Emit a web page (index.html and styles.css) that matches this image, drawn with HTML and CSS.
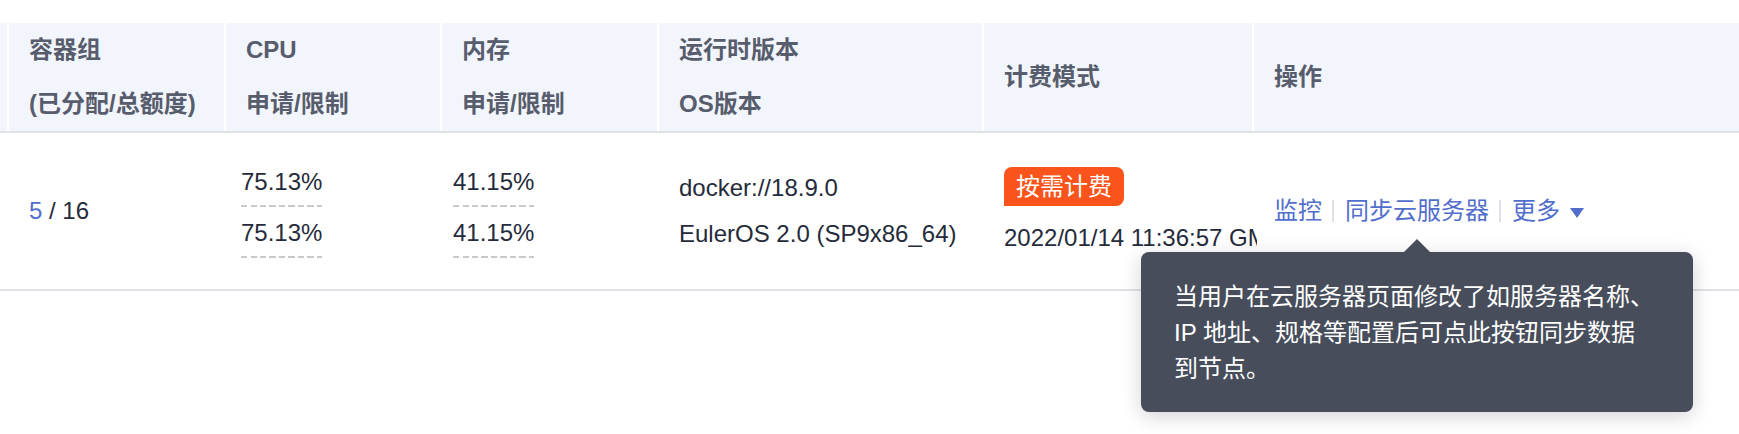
FILE: index.html
```html
<!DOCTYPE html>
<html lang="zh-CN">
<head>
<meta charset="utf-8">
<title>节点列表</title>
<link rel="stylesheet" href="styles.css">
</head>
<body>
<div class="page">
<div class="table">
  <div class="row head">
    <div class="cell stub"></div>
    <div class="cell"><div>容器组</div><div>(已分配/总额度)</div></div>
    <div class="cell"><div>CPU</div><div>申请/限制</div></div>
    <div class="cell"><div>内存</div><div>申请/限制</div></div>
    <div class="cell"><div>运行时版本</div><div>OS版本</div></div>
    <div class="cell"><div>计费模式</div></div>
    <div class="cell"><div>操作</div></div>
  </div>
  <div class="row body">
    <div class="cell stub"></div>
    <div class="cell pods"><div><span class="link">5</span> / 16</div></div>
    <div class="cell usage cpu">
      <div class="usage-item">75.13%</div>
      <div class="usage-item">75.13%</div>
    </div>
    <div class="cell usage mem">
      <div class="usage-item">41.15%</div>
      <div class="usage-item">41.15%</div>
    </div>
    <div class="cell versions">
      <div>docker://18.9.0</div>
      <div>EulerOS 2.0 (SP9x86_64)</div>
    </div>
    <div class="cell billing">
      <span class="badge">按需计费</span>
      <div class="date">2022/01/14 11:36:57 GMT+08:00</div>
    </div>
    <div class="cell actions">
      <div class="action-list">
        <span class="link">监控</span>
        <span class="sep"></span>
        <span class="link tip-anchor">同步云服务器
          <span class="tooltip">当用户在云服务器页面修改了如服务器名称、<br>IP 地址、规格等配置后可点此按钮同步数据<br>到节点。</span>
        </span>
        <span class="sep"></span>
        <span class="link more">更多<span class="caret"></span></span>
      </div>
    </div>
  </div>
</div>
</div>
</body>
</html>
```

FILE: styles.css
```css
* { box-sizing: border-box; }

html, body {
  margin: 0;
  background: #ffffff;
}

body {
  font-family: "Liberation Sans", "Noto Sans CJK SC", sans-serif;
  font-size: 24px;
  color: #252b3a;
}

.page {
  min-height: 434px;
  padding-top: 23px;
}

.row {
  display: grid;
  grid-template-columns: 7px 217px 216px 217px 325px 270px 1fr;
}

/* header */
.head {
  height: 110px;
  background: #f2f5fc;
  border-bottom: 2px solid #dfe1e6;
  color: #575d6c;
  font-weight: 700;
}

.head .cell {
  border-left: 2px solid #ffffff;
  padding-left: 20px;
  display: flex;
  flex-direction: column;
  justify-content: center;
  line-height: 54px;
  white-space: nowrap;
}

.head .cell.stub {
  border-left: 0;
  padding: 0;
}

/* body */
.body {
  height: 158px;
  border-bottom: 2px solid #dfe1e6;
}

.body .cell {
  padding-left: 22px;
  display: flex;
  flex-direction: column;
  justify-content: center;
  align-items: flex-start;
  line-height: 36px;
  white-space: nowrap;
}

.body .cell.stub { padding: 0; }

.link { color: #526ecc; }

.body .cell.cpu { padding-left: 17px; }
.body .cell.mem { padding-left: 13px; }

.usage-item {
  line-height: 36px;
  padding-bottom: 7px;
  background: repeating-linear-gradient(to right, #c8c9cc 0 6px, transparent 6px 9.5px) left bottom / 100% 2px no-repeat;
}

.usage-item + .usage-item { margin-top: 8px; }

.body .cell.versions { line-height: 46px; }

.body .cell.billing {
  overflow: hidden;
  margin-right: -5px;
}

.badge {
  display: inline-block;
  height: 39px;
  line-height: 39px;
  padding: 0 12px;
  background: #fa541c;
  color: #ffffff;
  border-radius: 8px 8px 8px 0;
}

.date {
  margin-top: 14px;
  line-height: 36px;
}

.body .cell.actions { position: relative; z-index: 2; }

.action-list {
  display: flex;
  align-items: center;
  line-height: 36px;
}

.sep {
  width: 2px;
  height: 22px;
  background: #dfe1e6;
  margin: 0 11px 0 10px;
}

.more {
  display: flex;
  align-items: center;
}

.caret {
  width: 0;
  height: 0;
  margin-left: 10px;
  margin-top: 4px;
  border-left: 7.5px solid transparent;
  border-right: 7.5px solid transparent;
  border-top: 10px solid #526ecc;
}

/* tooltip */
.tip-anchor { position: relative; }

.tooltip {
  position: absolute;
  left: 50%;
  top: calc(100% + 23px);
  transform: translateX(-50%);
  width: 552px;
  padding: 27px 34px 25px 33px;
  background: #474d5b;
  color: #ffffff;
  border-radius: 8px;
  line-height: 36px;
  font-size: 24px;
  white-space: nowrap;
  box-shadow: 0 4px 20px rgba(0, 0, 0, 0.18);
  z-index: 10;
}

.tooltip::before {
  content: "";
  position: absolute;
  top: -13px;
  left: 50%;
  margin-left: -13px;
  border-left: 13px solid transparent;
  border-right: 13px solid transparent;
  border-bottom: 13px solid #474d5b;
}
```
